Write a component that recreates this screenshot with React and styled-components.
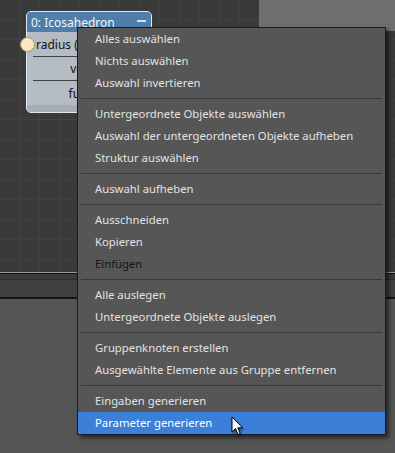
import React from "react";
import styled, { createGlobalStyle } from "styled-components";

const GlobalStyle = createGlobalStyle`
  html, body {
    margin: 0;
    padding: 0;
    background: #555555;
  }
  body {
    font-family: "Noto Sans", "Open Sans", sans-serif;
  }
`;

const Screen = styled.div`
  position: relative;
  width: 395px;
  height: 453px;
  overflow: hidden;
  display: flex;
  flex-direction: column;
  background: #555555;
`;

const Canvas = styled.div`
  position: relative;
  height: 272px;
  background-color: #3a3a3a;
  background-image: linear-gradient(to right, #414141 1px, transparent 1px),
    linear-gradient(to bottom, #414141 1px, transparent 1px);
  background-size: 20px 20px;
  background-position: -1px -1px;
`;

const TopPanel = styled.div`
  position: absolute;
  left: 259px;
  top: 0;
  right: 0;
  height: 31px;
  background: #6f6f6f;
`;

const Splitter = styled.div`
  height: 6px;
  border-top: 1px solid #9a9a9a;
  border-bottom: 1px solid #2c2c2c;
  background: #3a3a3a;
  box-shadow: inset 0 1px 0 #111111;
`;

const StatusBar = styled.div`
  height: 17px;
  background: #404040;
  border-bottom: 2px solid #161616;
`;

const Lower = styled.div`
  flex: 1;
  background: #555555;
`;

const Node = styled.div`
  position: absolute;
  left: 26px;
  top: 11px;
  width: 124px;
  height: 100px;
  border: 1px solid #e4e8ec;
  border-radius: 5px;
  background: #b5bcc4;
  display: flex;
  flex-direction: column;
`;

const NodeHeader = styled.div`
  height: 20px;
  border-radius: 4px 4px 0 0;
  background: #4f7eaa;
  color: #f4f6f8;
  font-size: 12px;
  display: flex;
  align-items: center;
  justify-content: space-between;
  padding: 0 5px 0 4px;
`;

const Minimize = styled.span`
  width: 9px;
  height: 2px;
  margin-bottom: 3px;
  background: #cfe0f0;
`;

const NodeRow = styled.div`
  position: relative;
  height: ${(p) => p.$h}px;
  margin-left: 6px;
  display: flex;
  align-items: center;
  justify-content: ${(p) => (p.$center ? "center" : "flex-start")};
  padding-left: ${(p) => (p.$center ? 0 : 3)}px;
  font-size: 12px;
  color: #111111;
  border-bottom: ${(p) => (p.$last ? "none" : "1px solid #3e4245")};
`;

const NodeFoot = styled.div`
  flex: 1;
  background: #a6adb5;
  border-radius: 0 0 4px 4px;
`;

const Port = styled.span`
  position: absolute;
  left: -13px;
  top: 5px;
  width: 13px;
  height: 13px;
  border-radius: 50%;
  background: #fde5c0;
  border: 1px solid #a89170;
`;

const Menu = styled.div`
  position: absolute;
  left: 77px;
  top: 27px;
  width: 307px;
  border: 1px solid #1c1c1c;
  background: #565656;
  box-shadow: 3px 3px 4px rgba(0, 0, 0, 0.55);
  display: flex;
  flex-direction: column;
  font-size: 11.3px;
`;

const Item = styled.div`
  height: 22px;
  box-sizing: border-box;
  padding: 0 0 2px 17px;
  display: flex;
  align-items: center;
  color: ${(p) => (p.$disabled ? "#141414" : p.$active ? "#ffffff" : "#e2e2e2")};
  background: ${(p) => (p.$active ? "#3b7fd9" : "transparent")};
  white-space: nowrap;
`;

const Separator = styled.div`
  height: 1px;
  margin: 4px 3px;
  background: #383838;
`;

const Cursor = styled.svg`
  position: absolute;
  left: 231px;
  top: 416px;
  filter: drop-shadow(1px 2px 1px rgba(0, 0, 0, 0.45));
`;

const groups = [
  ["Alles auswählen", "Nichts auswählen", "Auswahl invertieren"],
  [
    "Untergeordnete Objekte auswählen",
    "Auswahl der untergeordneten Objekte aufheben",
    "Struktur auswählen",
  ],
  ["Auswahl aufheben"],
  ["Ausschneiden", "Kopieren", "Einfügen"],
  ["Alle auslegen", "Untergeordnete Objekte auslegen"],
  ["Gruppenknoten erstellen", "Ausgewählte Elemente aus Gruppe entfernen"],
  ["Eingaben generieren", "Parameter generieren"],
];

const App = () => {
  return (
    <Screen>
      <GlobalStyle />
      <Canvas>
        <TopPanel />
        <Node>
          <NodeHeader>
            <span>0: Icosahedron</span>
            <Minimize />
          </NodeHeader>
          <NodeRow $h={24}>
            <Port />
            radius (Size)
          </NodeRow>
          <NodeRow $h={23} $center>
            vertices
          </NodeRow>
          <NodeRow $h={24} $center $last>
            function
          </NodeRow>
          <NodeFoot />
        </Node>
      </Canvas>
      <Splitter />
      <StatusBar />
      <Lower />

      <Menu>
        {groups.map((items, gi) => (
          <React.Fragment key={gi}>
            {gi > 0 && <Separator />}
            {items.map((label) => (
              <Item
                key={label}
                $disabled={label === "Einfügen"}
                $active={label === "Parameter generieren"}
              >
                {label}
              </Item>
            ))}
          </React.Fragment>
        ))}
      </Menu>

      <Cursor width="14" height="21" viewBox="0 0 14 21">
        <path
          d="M1 1 L1 16 L4.5 12.5 L7 18.5 L9.2 17.6 L6.8 11.8 L11.5 11.8 Z"
          fill="#ffffff"
          stroke="#000000"
          strokeWidth="1"
          strokeLinejoin="round"
        />
      </Cursor>
    </Screen>
  );
};

export default App;
